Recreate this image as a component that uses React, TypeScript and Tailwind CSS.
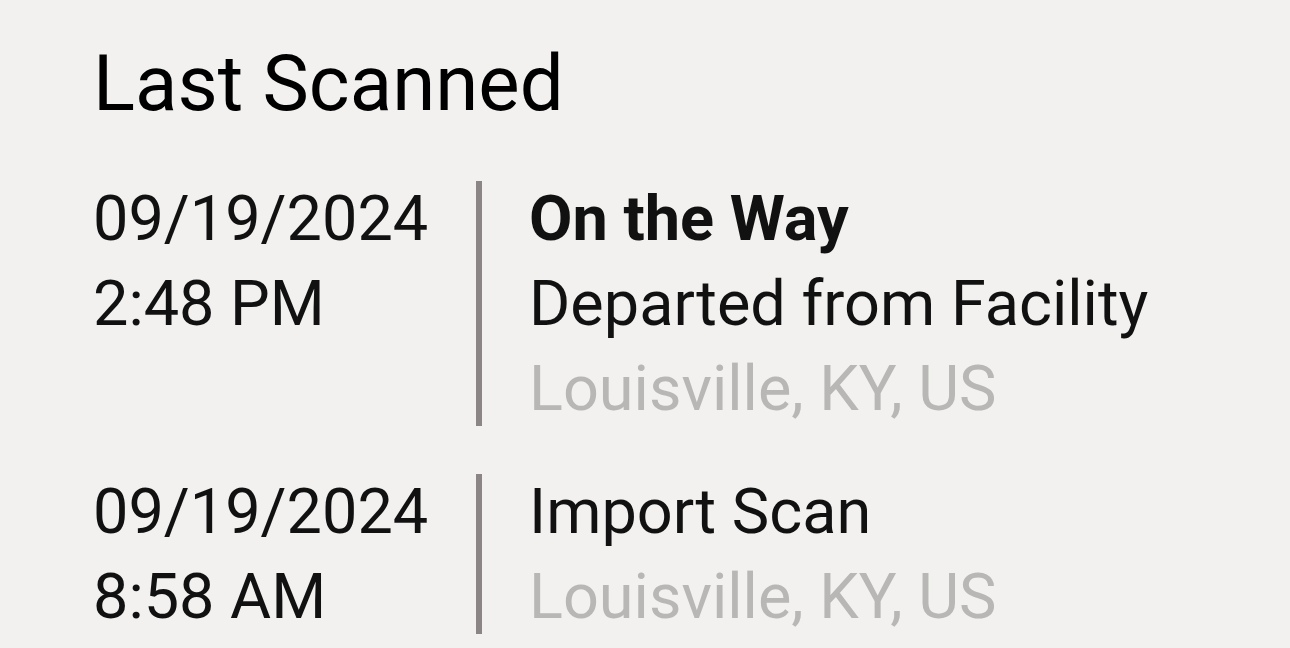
export default function App() {
  const scans = [
    {
      date: '09/19/2024',
      time: '2:48 PM',
      status: 'On the Way',
      detail: 'Departed from Facility',
      place: 'Louisville, KY, US',
    },
    {
      date: '09/19/2024',
      time: '8:58 AM',
      detail: 'Import Scan',
      place: 'Louisville, KY, US',
    },
  ]

  return (
    <main
      className="min-h-screen w-full bg-[#f2f1ef] pl-[93px] pt-[38px] text-[#111111]"
      style={{ fontFamily: 'Roboto, "Liberation Sans", sans-serif' }}
    >
      <h1 className="text-[78px] leading-[92px] font-normal text-black">Last Scanned</h1>

      <div className="mt-[46px] flex flex-col gap-[38px]">
        {scans.map((s, i) => (
          <div key={i} className="flex text-[63px] leading-[85px]">
            <div className="w-[383px] shrink-0">
              <div>{s.date}</div>
              <div>{s.time}</div>
            </div>
            <div className="my-[5px] w-[6px] shrink-0 bg-[#8b8685]" />
            <div className="pl-[47px]">
              {s.status && <div className="font-bold">{s.status}</div>}
              <div>{s.detail}</div>
              <div className="text-[#b8b7b5]">{s.place}</div>
            </div>
          </div>
        ))}
      </div>
    </main>
  )
}
